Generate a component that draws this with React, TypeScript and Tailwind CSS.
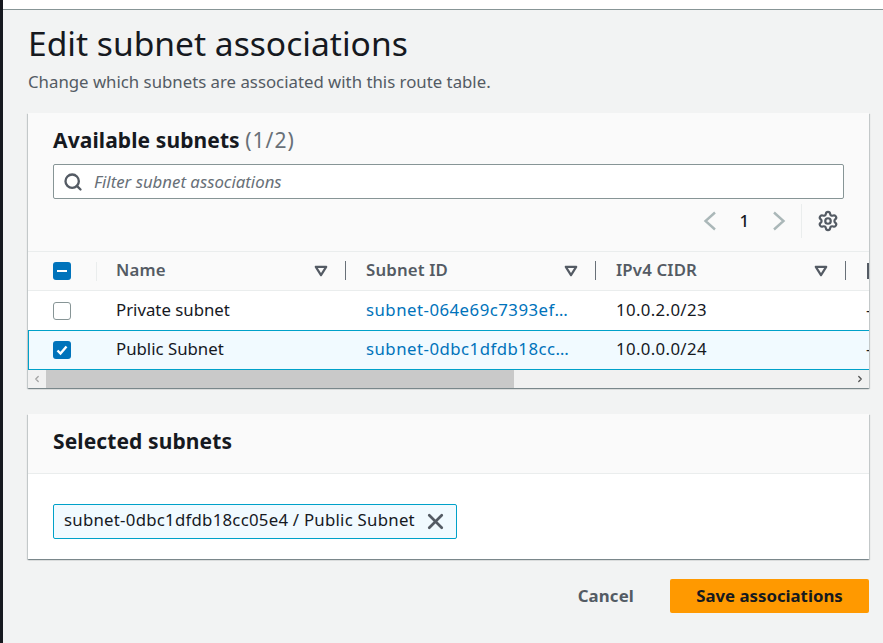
import { Settings, Search, X, ChevronLeft, ChevronRight } from 'lucide-react';

function SortCaret() {
  return (
    <svg width="14" height="12" viewBox="0 0 14 12" className="shrink-0">
      <path d="M1.8 1.8h10.4L7 10.2z" fill="none" stroke="#545b64" strokeWidth="2.2" strokeLinejoin="round" />
    </svg>
  );
}

function PageChevron({ flip }: { flip?: boolean }) {
  return (
    <svg width="14" height="20" viewBox="0 0 14 20" className={`shrink-0 ${flip ? 'rotate-180' : ''}`}>
      <path d="M12 1.5 2.5 10 12 18.5" fill="none" stroke="#aab7b8" strokeWidth="2.4" />
    </svg>
  );
}

function HeaderCell({ label, width }: { label: string; width: string }) {
  return (
    <div className={`flex items-center h-full shrink-0 ${width}`}>
      <span className="text-[16.8px] tracking-[0.15px] font-semibold text-[#545b64] leading-none mb-[2px]">{label}</span>
      <div className="flex items-center ml-auto">
        <SortCaret />
      </div>
      <div className="w-px h-[19px] bg-[#687078] ml-[17px] mb-[1px]" />
    </div>
  );
}

function Row({ name, id, cidr, selected }: { name: string; id: string; cidr: string; selected?: boolean }) {
  return (
    <div
      className={`flex items-center shrink-0 w-[1100px] ${
        selected ? 'h-[40px] bg-[#f1faff] border-y border-l border-[#00a1c9] box-border' : 'h-[39px] bg-white'
      }`}
    >
      <div className={`shrink-0 ${selected ? 'w-[87px] pl-[24px]' : 'w-[88px] pl-[25px]'}`}>
        {selected ? (
          <div className="w-[18px] h-[18px] rounded-[3px] bg-[#0073bb] flex items-center justify-center">
            <svg width="14" height="14" viewBox="0 0 14 14">
              <path d="M2.5 7.5 5.5 10.5 11.5 3.5" fill="none" stroke="white" strokeWidth="2.4" />
            </svg>
          </div>
        ) : (
          <div className="w-[18px] h-[18px] rounded-[3px] bg-white border-[1.5px] border-[#879596]" />
        )}
      </div>
      <div className="w-[250px] shrink-0 text-[#16191f] mb-[2px]">{name}</div>
      <div className="w-[250px] shrink-0 text-[#0073bb] tracking-[0.48px] mb-[2px]">{id}</div>
      <div className="w-[250px] shrink-0 text-[#16191f] tracking-[0.36px] mb-[2px]">{cidr}</div>
      <div className="text-[#16191f] mb-[2px]">-</div>
    </div>
  );
}

export default function App() {
  return (
    <div className="w-[883px] h-[643px] overflow-hidden flex bg-[#f2f3f3] text-[16.8px] font-['Noto_Sans',sans-serif]">
      <div className="w-[3px] bg-[#16191f] shrink-0" />
      <div className="flex-1 min-w-0 flex flex-col">
        <div className="h-[10px] bg-white border-b border-[#879596] shrink-0" />
        <div className="pl-[25px] pr-[14px] flex flex-col">
          <h1 className="text-[33.6px] leading-[40px] mt-[13px] text-[#16191f]">Edit subnet associations</h1>
          <p className="leading-[22px] mt-[8px] text-[#545b64]">
            Change which subnets are associated with this route table.
          </p>

          <section className="mt-[20px] h-[275px] bg-[#fafafa] shadow-[0_1px_1px_0_rgba(0,28,36,0.3),1px_1px_1px_0_rgba(0,28,36,0.15),-1px_1px_1px_0_rgba(0,28,36,0.15)] flex flex-col overflow-hidden">
            <div className="h-[139px] shrink-0 px-[25px] pt-[14px] flex flex-col border-b border-[#eaeded]">
              <h2 className="text-[21px] leading-[26px] font-bold tracking-[0.1px] text-[#16191f]">
                Available subnets <span className="font-normal tracking-[1px] text-[#687078]">(1/2)</span>
              </h2>
              <div className="mt-[11px] h-[35px] bg-white border border-[#879596] rounded-[2px] flex items-center pl-[9px] w-[791px]">
                <Search size={20} strokeWidth={2.8} className="text-[#545b64]" />
                <span className="ml-[11px] italic text-[#687078]">Filter subnet associations</span>
              </div>
              <div className="mt-[5px] flex items-center justify-end pr-[5px] h-[34px]">
                <PageChevron />
                <span className="ml-[22px] mr-[23px] text-[#16191f] font-medium leading-none">1</span>
                <PageChevron flip />
                <div className="w-px h-[34px] bg-[#eaeded] ml-[15px] mr-[15px]" />
                <Settings size={22} strokeWidth={2.4} className="text-[#545b64]" />
              </div>
            </div>

            <div className="flex-1 min-h-0 overflow-hidden">
              <div className="flex items-center h-[39px] w-[1100px] border-b border-[#eaeded] bg-[#fafafa]">
                <div className="w-[88px] shrink-0 pl-[25px] flex items-center">
                  <div className="w-[18px] h-[18px] rounded-[3px] bg-[#0073bb] flex items-center justify-center">
                    <div className="w-[10px] h-[2.5px] bg-white" />
                  </div>
                  <div className="w-px h-[19px] bg-[#eaeded] ml-[25px]" />
                </div>
                <HeaderCell label="Name" width="w-[230px]" />
                <div className="w-[20px] shrink-0" />
                <HeaderCell label="Subnet ID" width="w-[230px]" />
                <div className="w-[20px] shrink-0" />
                <HeaderCell label="IPv4 CIDR" width="w-[230px]" />
                <div className="w-[21px] shrink-0" />
                <div className="w-[3px] h-[16px] bg-[#545b64]" />
              </div>
              <Row name="Private subnet" id="subnet-064e69c7393ef…" cidr="10.0.2.0/23" />
              <Row name="Public Subnet" id="subnet-0dbc1dfdb18cc…" cidr="10.0.0.0/24" selected />
            </div>

            <div className="h-[18px] shrink-0 bg-[#f1f1f1] flex items-center">
              <div className="w-[18px] flex justify-center text-[#a3a3a3]">
                <ChevronLeft size={10} strokeWidth={3} />
              </div>
              <div className="w-[468px] h-full bg-[#c9c9c9]" />
              <div className="ml-auto w-[18px] flex justify-center text-[#505050]">
                <ChevronRight size={10} strokeWidth={3} />
              </div>
            </div>
          </section>

          <section className="mt-[26px] h-[145px] bg-white shadow-[0_1px_1px_0_rgba(0,28,36,0.3),1px_1px_1px_0_rgba(0,28,36,0.15),-1px_1px_1px_0_rgba(0,28,36,0.15)] flex flex-col">
            <div className="h-[60px] shrink-0 bg-[#fafafa] border-b border-[#eaeded] px-[25px] pb-[3px] flex items-center">
              <h2 className="text-[21px] font-bold tracking-[0.1px] text-[#16191f]">Selected subnets</h2>
            </div>
            <div className="px-[25px] pt-[30px]">
              <div className="flex w-[404px] items-center h-[35px] bg-[#f1faff] border border-[#00a1c9] rounded-[2px] pl-[10px] text-[#16191f]">
                <span className="tracking-[0.25px] mb-[3px]">subnet-0dbc1dfdb18cc05e4 / Public Subnet</span>
                <X size={25} strokeWidth={2.6} className="ml-auto mr-[8px] text-[#545b64] mb-[1px]" />
              </div>
            </div>
          </section>

          <div className="mt-[20px] flex items-center justify-end">
            <span className="font-bold tracking-[0.15px] text-[#545b64] mr-[36px]">Cancel</span>
            <button
              type="button"
              className="h-[34px] w-[199px] rounded-[2px] bg-[#ff9900] font-bold text-[#16191f]"
            >
              Save associations
            </button>
          </div>
        </div>
      </div>
    </div>
  );
}
